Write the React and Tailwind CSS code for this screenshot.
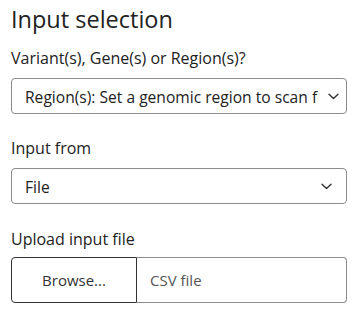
import React from 'react';

const Chevron = () => (
  <svg width="11" height="7" viewBox="0 0 11 7" fill="none" className="shrink-0">
    <path d="M1 1.25 5.5 5.5 10 1.25" stroke="#333" strokeWidth="1.4" strokeLinecap="round" strokeLinejoin="round" />
  </svg>
);

const SelectBox = ({ value, wide }) => (
  <div
    className={
      wide
        ? 'flex h-[36px] w-[336px] items-center rounded-[4px] border border-[#8c8c8c] bg-white pl-[13px] pr-[7px]'
        : 'flex h-[36px] w-[336px] items-center rounded-[4px] border border-[#8c8c8c] bg-white pl-[13px] pr-[14px]'
    }
  >
    <div className="flex-1 overflow-hidden whitespace-nowrap pt-[2px] text-[15.6px] leading-[24px] text-[#222]">{value}</div>
    <div className="ml-[10px] pt-[1px]">
      <Chevron />
    </div>
  </div>
);

const App = () => {
  return (
    <div className="min-h-screen bg-white px-[11px] pt-[1px] text-[#222]" style={{ fontFamily: '"Open Sans", sans-serif' }}>
      <h1 className="text-[23.5px] leading-[36px]">Input selection</h1>

      <div className="mt-[9px] text-[16px] leading-[24px]">Variant(s), Gene(s) or Region(s)?</div>
      <div className="mt-[8px]">
        <SelectBox value="Region(s): Set a genomic region to scan for variants" wide />
      </div>

      <div className="mt-[22px] text-[16px] leading-[24px]">Input from</div>
      <div className="mt-[8px]">
        <SelectBox value="File" />
      </div>

      <div className="mt-[23px] text-[16px] leading-[24px]">Upload input file</div>
      <div className="mt-[6px] flex h-[46px] w-[336px]">
        <div className="flex w-[126px] items-center justify-center rounded-l-[4px] border border-[#333] bg-white text-[15px] font-medium text-[#333]">
          Browse...
        </div>
        <div className="flex flex-1 items-center rounded-r-[4px] border-y border-r border-[#8c8c8c] pl-[13px] text-[15px] text-[#555]">
          CSV file
        </div>
      </div>
    </div>
  );
};

export default App;
